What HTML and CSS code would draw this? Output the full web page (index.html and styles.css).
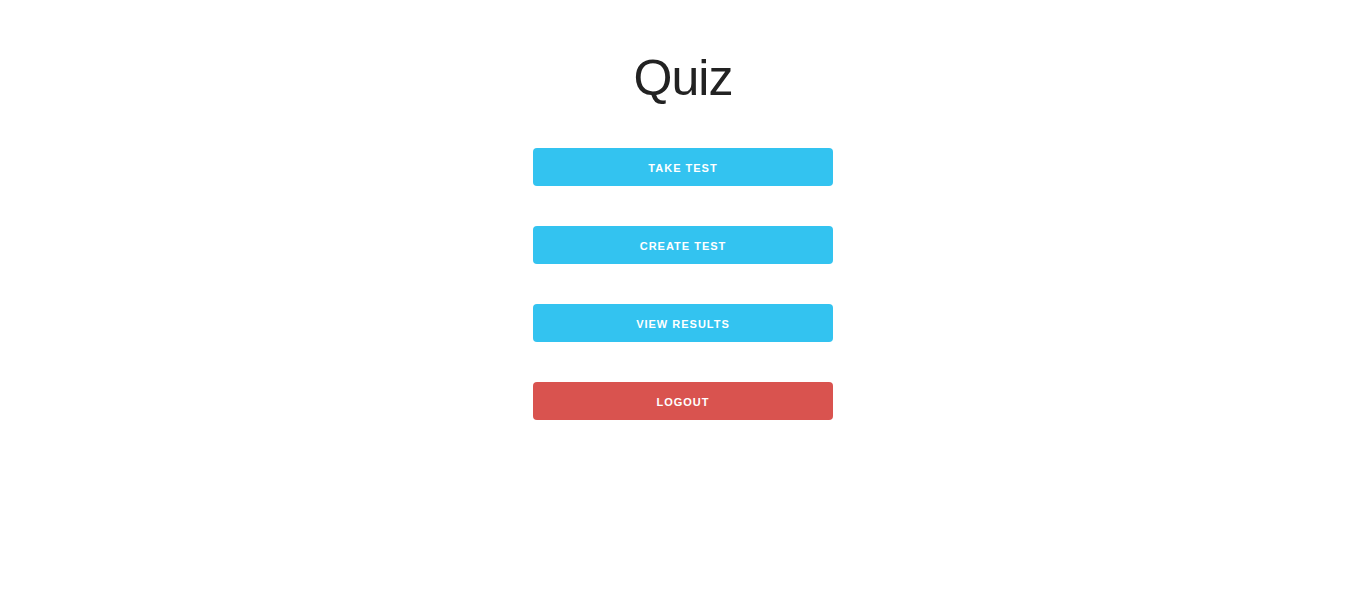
FILE: index.html
```html
<!DOCTYPE html>
<html>
<head>
<meta charset="utf-8">
<link rel="stylesheet" href="styles.css">
</head>
<body>
<main class="page">
  <h1 class="title">Quiz</h1>
  <div class="menu">
    <a class="btn btn-primary" href="#">Take Test</a>
    <a class="btn btn-primary" href="#">Create Test</a>
    <a class="btn btn-primary" href="#">View Results</a>
    <a class="btn btn-danger" href="#">Logout</a>
  </div>
</main>
</body>
</html>
```
FILE: styles.css
```css
html, body {
  margin: 0;
  padding: 0;
  background: #fff;
}
body {
  font-family: "Liberation Sans", Arial, sans-serif;
  color: #222;
}
.page {
  display: flex;
  flex-direction: column;
  align-items: center;
  padding-top: 48px;
}
.title {
  margin: 0;
  font-size: 50px;
  font-weight: 400;
  line-height: 60px;
  letter-spacing: -1px;
  color: #222;
}
.menu {
  display: flex;
  flex-direction: column;
  gap: 40px;
  margin-top: 40px;
  width: 300px;
}
.btn {
  display: block;
  box-sizing: border-box;
  height: 38px;
  padding-top: 2px;
  line-height: 36px;
  border-radius: 4px;
  text-align: center;
  text-decoration: none;
  text-transform: uppercase;
  font-size: 11px;
  font-weight: 700;
  letter-spacing: 1px;
  color: #fff;
}
.btn-primary { background: #33c3f0; }
.btn-danger { background: #d9534f; }
```
